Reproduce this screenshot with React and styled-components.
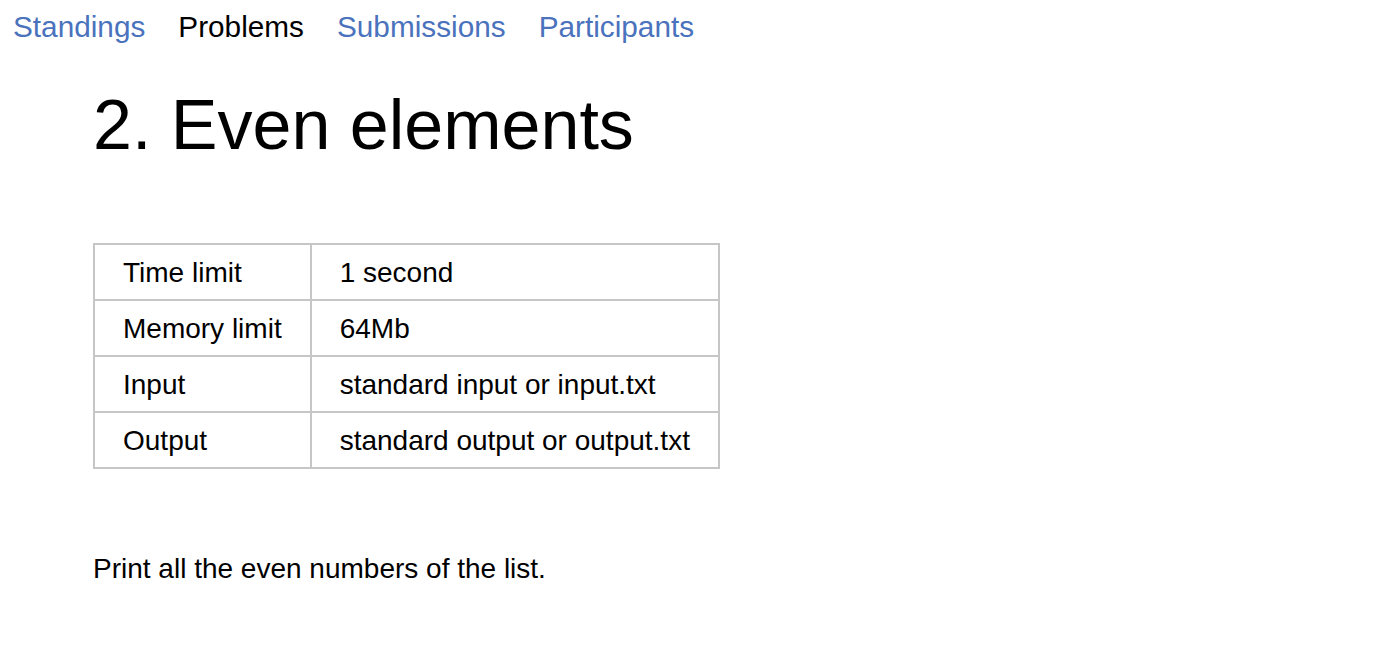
import React from "react";
import styled, { createGlobalStyle } from "styled-components";

const Global = createGlobalStyle`
  html, body { margin: 0; padding: 0; background: #fff; }
  body { font-family: "Liberation Sans", Arial, sans-serif; color: #000; }
`;

const Page = styled.div`
  display: flex;
  flex-direction: column;
`;

const Nav = styled.nav`
  display: flex;
  gap: 33px;
  padding: 10px 0 0 13px;
  font-size: 29.75px;
  line-height: 34px;
`;

const NavLink = styled.a`
  color: ${(p) => (p.$active ? "#000" : "#4a72bd")};
  text-decoration: none;
`;

const Content = styled.main`
  padding-left: 93px;
  display: flex;
  flex-direction: column;
  align-items: flex-start;
`;

const Title = styled.h1`
  margin: 41px 0 0 0;
  font-size: 70px;
  font-weight: normal;
  line-height: 80px;
`;

const Limits = styled.table`
  margin-top: 78px;
  border-collapse: collapse;
  font-size: 28px;
  line-height: 32px;
`;

const Cell = styled.td`
  border: 2px solid #c6c6c6;
  padding: 12px 28px 10px 28px;
  white-space: nowrap;
`;

const Statement = styled.p`
  margin: 84px 0 0 0;
  font-size: 28px;
  line-height: 32px;
`;

const rows = [
  ["Time limit", "1 second"],
  ["Memory limit", "64Mb"],
  ["Input", "standard input or input.txt"],
  ["Output", "standard output or output.txt"],
];

export default function App() {
  return (
    <Page>
      <Global />
      <Nav>
        <NavLink href="#">Standings</NavLink>
        <NavLink $active>Problems</NavLink>
        <NavLink href="#">Submissions</NavLink>
        <NavLink href="#">Participants</NavLink>
      </Nav>
      <Content>
        <Title>2. Even elements</Title>
        <Limits>
          <tbody>
            {rows.map(([k, v]) => (
              <tr key={k}>
                <Cell>{k}</Cell>
                <Cell>{v}</Cell>
              </tr>
            ))}
          </tbody>
        </Limits>
        <Statement>Print all the even numbers of the list.</Statement>
      </Content>
    </Page>
  );
}
